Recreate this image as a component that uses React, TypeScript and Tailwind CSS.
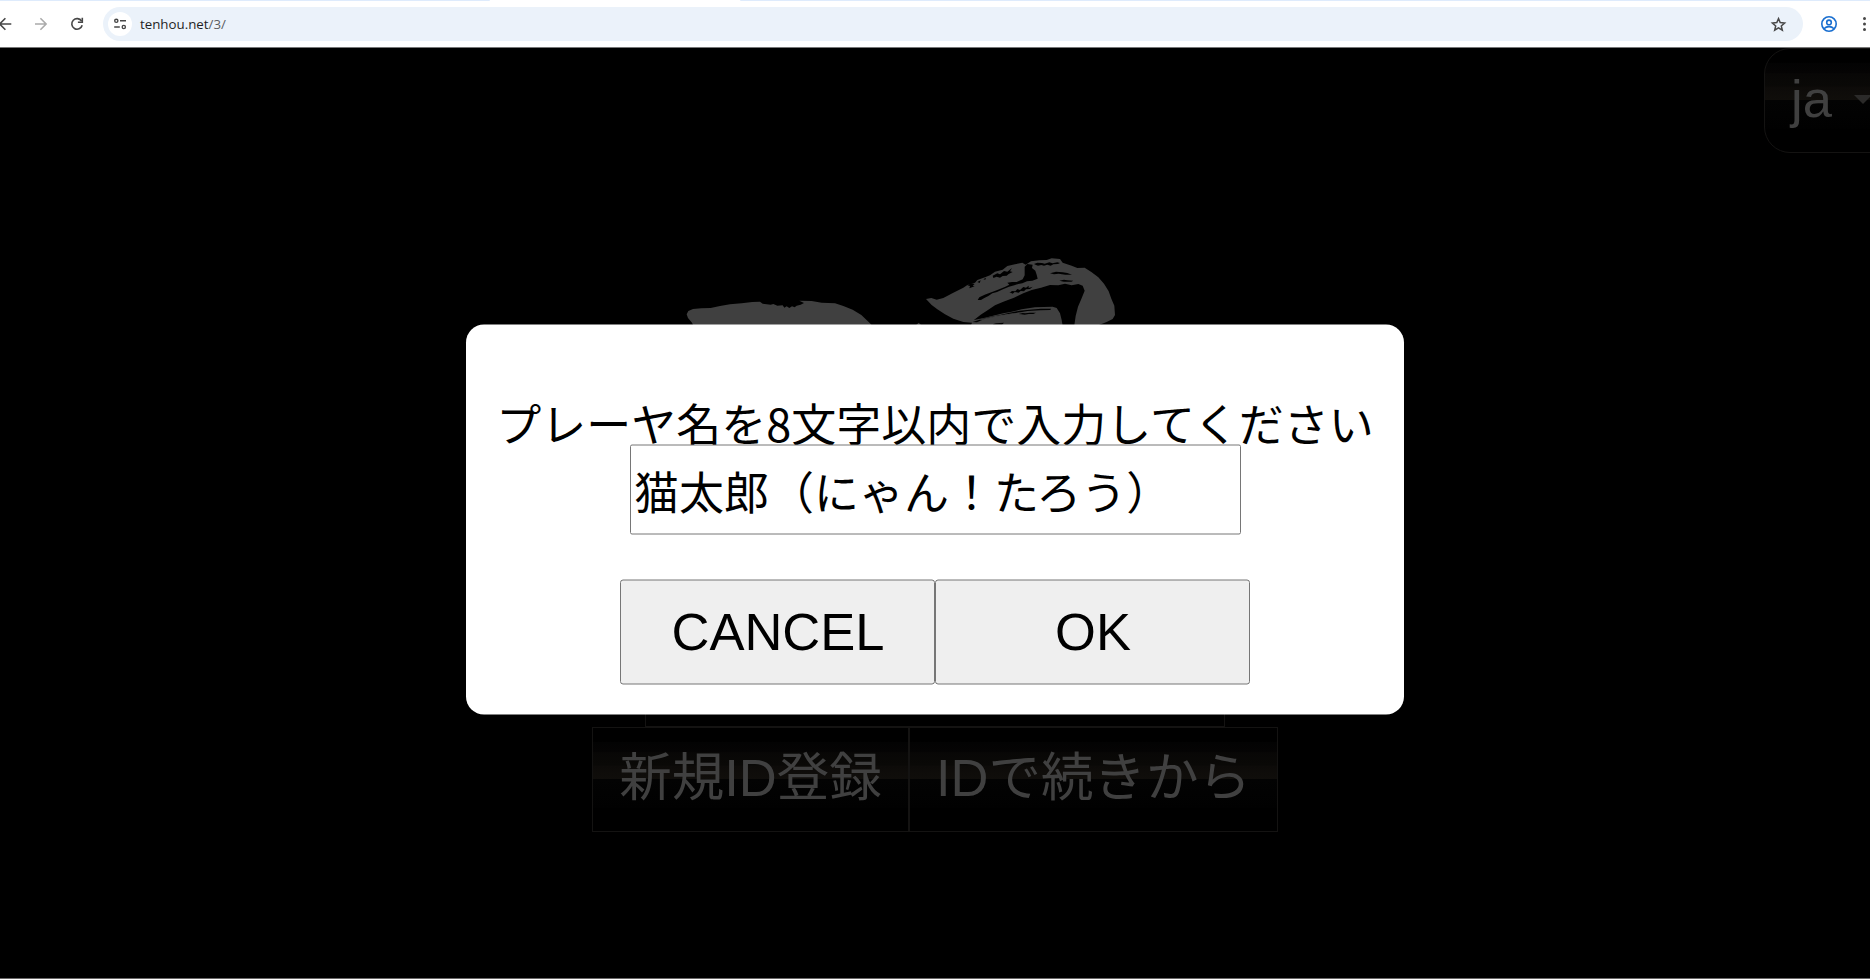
import type { ReactNode } from 'react';

const menuShade = "border border-[#141312] bg-[linear-gradient(to_bottom,#000_0%,#000_13%,#030303_14%,#050404_23%,#080706_24%,#0a0907_36%,#0d0b09_37%,#100e0b_50%,#030303_50%,#010101_77%,#000_78%)] text-[#404040]";

const BrowserBar = () => (
  <header className="h-12 shrink-0 flex flex-col bg-white border-b border-[#777]">
    <div className="h-px flex justify-between">
      <span className="w-[490px] bg-[#deebfc] rounded-br-sm" />
      <span className="w-[1130px] bg-[#deebfc] rounded-bl-sm" />
    </div>
    <div className="flex-1 flex items-center">
      <svg className="w-[103px] h-[34px] shrink-0" viewBox="0 0 103 34" fill="none" strokeWidth="1.6">
        <path d="M11.3 17H0M5.4 11.3L-.3 17l5.7 5.7" stroke="#474747" />
        <path d="M35 17h11M40.4 11.3l5.7 5.7-5.7 5.7" stroke="#ababab" />
        <path d="M81.6 14.1A5.3 5.3 0 1 0 82.2 18.3" stroke="#474747" />
        <path d="M82.3 10.8v4.4h-4.4" stroke="#474747" />
      </svg>
      <div className="w-[1700px] h-[34px] shrink-0 rounded-full bg-[#ebf2fa] flex items-center pl-[5px] pr-[16px]">
        <span className="size-6 rounded-full bg-white flex items-center justify-center">
          <svg className="size-[14px]" viewBox="0 0 14 14" fill="none" stroke="#474747" strokeWidth="1.4">
            <circle cx="3.3" cy="3.8" r="1.6" />
            <path d="M7 3.8h6M1.2 10h5.6" />
            <circle cx="10.8" cy="10" r="1.6" />
          </svg>
        </span>
        <span className="ml-2 text-[13.3px] leading-5 text-[#1f1f1f] font-['Open_Sans','Noto_Sans',sans-serif]">
          tenhou.net<span className="text-[#5b5e63]">/3/</span>
        </span>
        <svg className="ml-auto size-[17px]" viewBox="0 0 17 17" fill="none" stroke="#474747" strokeWidth="1.5">
          <path d="M8.500 2.600l1.700 4 4.400.4-3.300 2.900 1 4.200-3.800-2.300-3.800 2.300 1-4.200L2.400 7l4.400-.4z" />
        </svg>
      </div>
      <svg className="ml-[17px] size-[18px] shrink-0" viewBox="0 0 18 18" fill="none" stroke="#1a6fd0" strokeWidth="1.6">
        <circle cx="9" cy="9" r="7.200" />
        <circle cx="9" cy="7.400" r="2.300" />
        <path d="M4 13.800c1.500-1.600 3.200-2.200 5-2.200s3.500.6 5 2.200" />
      </svg>
      <svg className="ml-[24px] w-1 h-4 shrink-0" viewBox="0 0 4 16" fill="#474747">
        <circle cx="2.500" cy="2.500" r="1.500" />
        <circle cx="2.500" cy="8" r="1.500" />
        <circle cx="2.500" cy="13.500" r="1.500" />
      </svg>
    </div>
  </header>
);

const BrushLogo = () => (
  <svg className="w-[460px] h-[78px]" viewBox="0 0 1380 234" fill="#404040">
    <path d="M73 234L66 218L54 204L50 193L55 183L69 177L94 175L122 174L150 168L180 163L215 160L247 156L270 155L278 161L302 164L310 162L322 167L338 166L343 173L350 169L358 174L366 169L374 172L380 167L392 164L402 159L388 152L425 153L455 158L495 160L520 168L548 179L574 195L600 220L612 234Z" />
    <path d="M738 226l8-8 8 8z" />
    <path d="M768 147L784 144L800 149L820 144L850 128L880 113L892 105L915 98L922 90L945 82L960 76L975 65L998 59L1012 48L1035 43L1057 38L1067 44L1083 34L1108 31L1130 30L1145 25L1170 27L1178 38L1205 47L1222 54L1244 53L1264 66L1285 82L1302 101L1316 124L1324 146L1333 167L1335 195L1328 207L1310 216L1285 226H1213L1217 198L1224 170L1234 147L1244 122L1238 107L1225 102L1205 106L1185 101L1165 106L1140 105L1113 113L1085 120L1060 130L1032 143L1000 155L975 166L955 179L932 194L912 210L945 203L975 196L1000 190L1025 185L1055 178L1095 172L1148 170L1160 174L1170 190L1175 210L1178 228H902L906 218L880 216L850 206L825 193L802 178L785 165Z" />
    <g fill="#000">
      {/* dry-brush gaps */}
      <path d="M1064 50l8-8 16 2-2 10 10 8 4 12 3 12-16 6-16 2-14 6-12 2-12 4-16 4-18 8-18 8-14 4-12 8-12 6-10 6-10 0 5-8 16-8 20-7 20-8 22-9 12-6-6-6 14-2 14 0 18-8 6-12 0-14z" />
      <path d="M968 77l14-7 8 3 12-10 10 2 14-11-6 10 8 2-12 6-6 5-12 1-8 5-10-3-10 4zM892 106l12-6 10 2-6 5 6 2-16 6 2-7zM922 96l10-5-3 8zM940 88l8-5-2 6z" />
      <path d="M1092 42l10-4 14 1 8 2 14-4 10 3 14-3 8 2-6 3-14 1-8 4-10-3-10 3-8-2-10 2-6-2zM1140 70l18-5 20 2 14 2 14 5-20 0-20-3-14 2zM1168 92l14-3 10 2 18 1-6 3-22 0z" />
      <path d="M1018 129l8-6 10 1 6-7 8 3 10-9 8 2 8-6 0 7 12-4-8 7-12 1-6 6-10-1-6 5-12-2-6 5-6-3z" />
      <path d="M908 216l28-9 24-6 30-6 25-6 34-7 30-3 34-3 30 0-2 4-30 1-38 2-30 5-36 6-32 6-32 7-22 10z" />
      <path d="M1046 192l12-3 8 1 14-2 18 0-8 4-14 0-12 2-10-1zM968 223l10-3 24-2-6 6h-24z" />
    </g>
    <path d="M928 209l48-11 44-7 40-5-48 9-46 8-34 8z" />
  </svg>
);

const MenuButton = ({ children, width }: { children: ReactNode; width: string }) => (
  <button className={`${width} ${menuShade} h-[105px] pb-[3px] text-[52.5px] leading-[70px] whitespace-nowrap`}>
    {children}
  </button>
);

const TitleScreen = () => (
  <div className="h-full flex flex-col font-['Liberation_Sans','Noto_Sans_CJK_JP',sans-serif]">
    <div className="h-[105px] flex justify-end overflow-hidden">
      <button className={`${menuShade} w-[136px] -mr-[30px] shrink-0 rounded-[26px] flex items-center pl-[26px] pb-[2px] text-[52.5px]`}>
        <span>ja</span>
        <svg className="ml-[22px] w-[18px] h-[9px] shrink-0" viewBox="0 0 18 9" fill="#2b2a29">
          <path d="M0 0h18L9 9z" />
        </svg>
      </button>
    </div>
    <div className="mt-[97px] pl-[670px]">
      <BrushLogo />
    </div>
    <div className="mt-[294px] flex flex-col items-center">
      <div className="w-[580px] h-[105px] border border-[#141312]" />
      <div className="flex">
        <MenuButton width="w-[317px]">新規ID登録</MenuButton>
        <MenuButton width="w-[369px]">IDで続きから</MenuButton>
      </div>
    </div>
  </div>
);

const DialogButton = ({ children }: { children: ReactNode }) => (
  <button className="w-[315px] h-[105px] border border-[#767676] rounded-[3px] bg-[#efefef] pl-px text-[52.5px] text-black">
    {children}
  </button>
);

const NameDialog = () => (
  <div className="absolute inset-0 flex justify-center pt-[276px]">
    <div className="w-[938px] h-[390px] translate-y-[0.5px] rounded-[18px] bg-white flex flex-col items-center text-black text-[45px] font-['Liberation_Sans','Noto_Sans_CJK_JP',sans-serif]">
      <p className="mt-[65px] h-[55px] leading-[66px] whitespace-nowrap font-['Noto_Sans_CJK_JP',sans-serif]">
        プレーヤ名を8文字以内で入力してください
      </p>
      <input
        className="w-[611px] ml-px h-[90px] shrink-0 border border-[#767676] rounded-[2px] bg-white px-[3px] pt-px font-['Noto_Sans_CJK_JP',sans-serif]"
        defaultValue="猫太郎（にゃん！たろう）"
      />
      <div className="mt-[45px] flex font-['Liberation_Sans',sans-serif]">
        <DialogButton>CANCEL</DialogButton>
        <DialogButton>OK</DialogButton>
      </div>
    </div>
  </div>
);

const App = () => (
  <div className="w-full h-[979px] flex flex-col overflow-hidden bg-black">
    <BrowserBar />
    <main className="relative flex-1 min-h-0 border-b border-[#6b6969]">
      <TitleScreen />
      <NameDialog />
    </main>
  </div>
);

export default App;
